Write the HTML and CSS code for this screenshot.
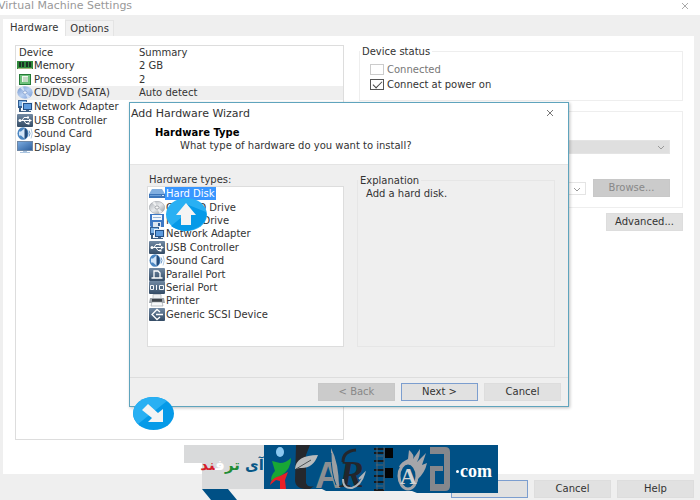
FILE: index.html
```html
<!DOCTYPE html>
<html lang="en">
<head>
<meta charset="utf-8">
<title>Virtual Machine Settings</title>
<link rel="stylesheet" href="styles.css">
</head>
<body>
<svg class="defs" aria-hidden="true">
  <defs>
    <linearGradient id="slate" x2="0" y2="1"><stop stop-color="#7189a3"/><stop offset="1" stop-color="#344c66"/></linearGradient>
    <linearGradient id="steel" x2="1" y2="1"><stop stop-color="#78a9df"/><stop offset="1" stop-color="#2f619f"/></linearGradient>
    <linearGradient id="disc" x2="1" y2="1"><stop stop-color="#6f93cb"/><stop offset=".5" stop-color="#b9d0f2"/><stop offset="1" stop-color="#7298d4"/></linearGradient>
    <linearGradient id="silver" x2="1" y2="1"><stop stop-color="#a9adb3"/><stop offset=".5" stop-color="#e8eaec"/><stop offset="1" stop-color="#8f949b"/></linearGradient>
  </defs>
  <symbol id="i-memory" viewBox="0 0 16 13"><path fill="#2f8a3c" d="M0 2h16v8H0z"/><path fill="#1d3323" d="M2 3h2v5H2zM5 3h2v5H5zM9 3h2v5H9zM12 3h2v5h-2z"/><path fill="#a7b77b" d="M1 9h14v1H1z"/></symbol>
  <symbol id="i-cpu" viewBox="0 0 16 13"><path fill="#257a37" d="M2 1h12v11H2z"/><path fill="#6fc27c" d="M3 2h10v9H3z"/><path fill="#f1f7ef" d="M5 3h6v6H5z"/><path fill="#c5d9c5" d="M6 4h5v5H6z"/></symbol>
  <symbol id="i-cd" viewBox="0 0 16 13"><ellipse cx="8" cy="6.500" rx="7.700" ry="6.200" fill="url(#disc)"/><path fill="#dfeafa" opacity=".8" d="M8 6.500 3 1.700 6 .6zM8 6.500l5.500 4.300-3 1.600z"/><ellipse cx="8" cy="6.500" rx="2" ry="1.600" fill="#eef3fb" stroke="#6d8cbe" stroke-width=".6"/></symbol>
  <symbol id="i-dvd" viewBox="0 0 16 13"><ellipse cx="8" cy="6.500" rx="7.700" ry="6.200" fill="url(#silver)" stroke="#92979d" stroke-width=".5"/><path fill="#fff" opacity=".7" d="M8 6.500 3 1.700 6 .6zM8 6.500l5.500 4.300-3 1.600z"/><ellipse cx="8" cy="6.500" rx="2" ry="1.600" fill="#f7f7f7" stroke="#8b8f95" stroke-width=".7"/></symbol>
  <symbol id="i-net" viewBox="0 0 16 13"><path fill="#315d91" d="M1 0h9v8H1z"/><path fill="#80b3e6" d="M2 1h7v5H2z"/><path fill="#3e5c7d" d="M2 8h2v3h3v1H2z"/><path fill="#e9f1fa" d="M5 2h11v9H5z"/><path fill="#234f84" d="M6 3h9v7H6z"/><path fill="#5d9bde" d="M7 4h7v5H7z"/><path fill="#43658b" d="M9 10h3v1h2v1H7v-1h2z"/></symbol>
  <symbol id="i-usb" viewBox="0 0 16 13"><rect width="16" height="13" rx="1" fill="url(#slate)"/><path stroke="#fff" fill="none" d="M3 6.500h10M5 6.500l2-3h3M7 6.500l2 3h2"/><circle cx="3" cy="6.500" r="1.500" fill="#fff"/><path fill="#fff" d="m12 4.800 3 1.700-3 1.700zM10 2.500h2v2h-2zM10.500 8.500h2v2h-2z"/></symbol>
  <symbol id="i-sound" viewBox="0 0 16 13"><ellipse cx="6" cy="6.500" rx="5.500" ry="6.300" fill="#4a86c2"/><path fill="#d4e6f8" d="M2 4.500h2L8 1v11L4 8.500H2z"/><path fill="#234b7a" d="M7.500 1q3 1 3 5.500t-3 5.500z"/><path fill="none" stroke="#6d9bcb" d="M12 3.500q2 3 0 6"/><path fill="none" stroke="#b5cde4" d="M14 1.500q2.500 5 0 10"/></symbol>
  <symbol id="i-display" viewBox="0 0 16 13"><path fill="#6e87a5" d="M0 0h16v10H0z"/><path fill="url(#steel)" d="M1 1h14v8H1z"/><path fill="#aac4df" d="M6 10h4v1h3v1H3v-1h3z"/></symbol>
  <symbol id="i-disk" viewBox="0 0 16 13"><path fill="#82afe0" d="M3 2h10l3 5v4H0V7z"/><path fill="#3d75b9" d="M0 7h16v4H0z"/><path fill="#6da0d9" d="M1 8h11v1H1z"/><path fill="#d4e7fa" d="M13 8h2v1h-2z"/></symbol>
  <symbol id="i-floppy" viewBox="0 0 16 13"><path fill="#3d78c5" d="M1 0h14v13H2l-1-1z"/><path fill="#f3f7fc" d="M3 1h10v5H3z"/><path fill="#99b6d9" d="M4 3h8v1H4z"/><path fill="#dbe4ef" d="M4 8h8v5H4z"/><path fill="#315c98" d="M9 9h2v3H9z"/></symbol>
  <symbol id="i-parallel" viewBox="0 0 16 13"><rect width="16" height="13" rx="1" fill="url(#slate)"/><path fill="none" stroke="#fff" stroke-width="1.300" d="M5 10V3h4l2 2v5M2.500 10h11"/></symbol>
  <symbol id="i-serial" viewBox="0 0 16 13"><rect width="16" height="13" rx="1" fill="url(#slate)"/><path fill="none" stroke="#f4f6f8" d="M1.500 4.500h3v4h-3zM7.500 4v5M10.500 4.500h4v4h-4z"/></symbol>
  <symbol id="i-printer" viewBox="0 0 16 13"><path fill="#edf0f2" stroke="#a6abb0" stroke-width=".6" d="M4 .5h8v5H4z"/><path fill="#9ea4aa" d="M1 4h14l1 5H0z"/><path fill="#3f454b" d="M3 5h10v3H3z"/><path fill="#f8f9fa" stroke="#92989f" stroke-width=".6" d="M3 8h10l1 4H2z"/></symbol>
  <symbol id="i-scsi" viewBox="0 0 16 13"><rect width="16" height="13" rx="1" fill="url(#slate)"/><path fill="none" stroke="#fff" stroke-width="1.300" d="m11 4-3-2.500-5 5 5 5L11 9M7 6.500h7"/></symbol>
  <symbol id="i-close" viewBox="0 0 8 8"><path fill="none" stroke="currentColor" d="m1 1 6 6M7 1 1 7"/></symbol>
  <symbol id="i-chevron" viewBox="0 0 8 5"><path fill="none" stroke="currentColor" d="m1 1 3 3 3-3"/></symbol>
</svg>

<main class="window">
  <header class="titlebar">
    <h1>Virtual Machine Settings</h1>
    <button class="close" aria-label="Close"><svg><use href="#i-close"/></svg></button>
  </header>
  <nav class="tabs">
    <button class="tab current">Hardware</button>
    <button class="tab">Options</button>
  </nav>
  <section class="pane">
    <div class="devices">
      <table>
        <thead><tr><th>Device</th><th>Summary</th></tr></thead>
        <tbody>
          <tr><td><svg class="icon"><use href="#i-memory"/></svg>Memory</td><td>2 GB</td></tr>
          <tr><td><svg class="icon"><use href="#i-cpu"/></svg>Processors</td><td>2</td></tr>
          <tr class="active"><td><svg class="icon"><use href="#i-cd"/></svg>CD/DVD (SATA)</td><td>Auto detect</td></tr>
          <tr><td><svg class="icon"><use href="#i-net"/></svg>Network Adapter</td><td></td></tr>
          <tr><td><svg class="icon"><use href="#i-usb"/></svg>USB Controller</td><td></td></tr>
          <tr><td><svg class="icon"><use href="#i-sound"/></svg>Sound Card</td><td></td></tr>
          <tr><td><svg class="icon"><use href="#i-display"/></svg>Display</td><td></td></tr>
        </tbody>
      </table>
    </div>
    <div class="details">
      <fieldset class="group status">
        <legend>Device status</legend>
        <label class="check off"><input type="checkbox" disabled>Connected</label>
        <label class="check"><input type="checkbox" checked>Connect at power on</label>
      </fieldset>
      <fieldset class="group connection">
        <div class="combo filled"><select aria-label="Drive" disabled></select><svg><use href="#i-chevron"/></svg></div>
        <div class="file">
          <div class="combo"><select aria-label="File" disabled></select><svg><use href="#i-chevron"/></svg></div>
          <button class="btn" disabled>Browse...</button>
        </div>
      </fieldset>
      <button class="btn advanced">Advanced...</button>
    </div>
  </section>
  <footer class="actions">
    <button class="btn primary" aria-label="OK"></button>
    <button class="btn">Cancel</button>
    <button class="btn">Help</button>
  </footer>
</main>

<section class="wizard" role="dialog" aria-labelledby="wizard-title">
  <header class="wizard-head">
    <div class="wizard-bar">
      <h2 id="wizard-title">Add Hardware Wizard</h2>
      <button class="close" aria-label="Close"><svg><use href="#i-close"/></svg></button>
    </div>
    <h3>Hardware Type</h3>
    <p>What type of hardware do you want to install?</p>
  </header>
  <div class="wizard-body">
    <div class="types">
      <h4 id="types-label">Hardware types:</h4>
      <ul aria-labelledby="types-label">
        <li class="selected"><svg class="icon"><use href="#i-disk"/></svg><span>Hard Disk</span></li>
        <li><svg class="icon"><use href="#i-dvd"/></svg><span>CD/DVD Drive</span></li>
        <li><svg class="icon"><use href="#i-floppy"/></svg><span>Floppy Drive</span></li>
        <li><svg class="icon"><use href="#i-net"/></svg><span>Network Adapter</span></li>
        <li><svg class="icon"><use href="#i-usb"/></svg><span>USB Controller</span></li>
        <li><svg class="icon"><use href="#i-sound"/></svg><span>Sound Card</span></li>
        <li><svg class="icon"><use href="#i-parallel"/></svg><span>Parallel Port</span></li>
        <li><svg class="icon"><use href="#i-serial"/></svg><span>Serial Port</span></li>
        <li><svg class="icon"><use href="#i-printer"/></svg><span>Printer</span></li>
        <li><svg class="icon"><use href="#i-scsi"/></svg><span>Generic SCSI Device</span></li>
      </ul>
    </div>
    <fieldset class="group explanation">
      <legend>Explanation</legend>
      <p>Add a hard disk.</p>
    </fieldset>
  </div>
  <footer class="wizard-foot">
    <button class="btn" disabled>&lt; Back</button>
    <button class="btn primary">Next &gt;</button>
    <button class="btn">Cancel</button>
  </footer>
</section>

<svg class="pointer up" viewBox="0 0 41 33" aria-hidden="true">
  <ellipse cx="20.500" cy="16.500" rx="20.500" ry="16.500" fill="#29b0f3"/>
  <path fill="#069ae8" d="m20 6 20 8q2 8-6 14-8 5-15 5-9-1-14-5l11-9z"/>
  <path fill="#f4f4f4" d="m20 5 10 12h-5v10H15V17h-5z"/>
</svg>
<svg class="pointer down" viewBox="0 0 41 33" aria-hidden="true">
  <ellipse cx="20.500" cy="16.500" rx="20.500" ry="16.500" fill="#069ae8"/>
  <path fill="#29b0f3" d="M34 4 5 27Q-3 18 2 9 8 0 20 0q8 0 14 4z"/>
  <path fill="#f4f4f4" d="m15 7 10 9 5-4v13H15l4-4L9 13z"/>
</svg>

<aside class="brand" aria-label="Site logo">
  <div class="brand-shade"></div>
  <div class="brand-name" lang="fa" dir="rtl"><span class="navy">آی</span> <span class="green">تر</span><span class="white">ف</span><span class="red">ند</span></div>
  <svg class="brand-art" viewBox="0 0 234 48" aria-hidden="true">
    <path fill="#005085" d="M0 0h234v48h-81l-5-2H62l-4-2H0z"/>
    <ellipse cx="16" cy="7" rx="4" ry="5" fill="#8bc8f0"/>
    <path fill="#18a735" d="M27 13q0 11-9 17l-11 6q0-6 4-10l-3-10 8 2q6 0 11-5z"/>
    <path fill="#e82127" d="M6 40q1-7 10-9l8-4-3 8 1 9h-6v-8l-4-1z"/>
    <path fill="#25282d" d="M32 0h14l-4 10v28q2 5 8 3l-4 3q-15 1-15-9z"/>
    <path fill="#b9bcbd" d="M31 24Q32 10 54 10q-5 14-18 13z"/>
    <path fill="none" stroke="#4d5355" d="m32 24 15-9"/>
    <text x="51" y="43" font-family="Liberation Sans" font-weight="700" font-size="36" fill="#8c8e91">A</text>
    <path fill="#9c9fa2" d="M67 3q8 15 8 40-9-10-8-22z"/>
    <path fill="none" stroke="#005085" d="M67 8q0 20 5 32"/>
    <text x="75" y="42" font-family="Liberation Serif" font-style="italic" font-weight="700" font-size="37" fill="#23262c">R</text>
    <path fill="none" stroke="#23262c" stroke-width="3" d="M79 17q0-11 13-12"/>
    <path fill="none" stroke="#aeb3b9" stroke-width="2" d="M79 34q0 10 9 9 9-3 12-14l-5 5"/>
    <path stroke="#15191d" stroke-width="2" d="M110 4h10M110 8h10M110 16h10M110 25h10M110 31h10M110 37h10M110 45h10"/>
    <path stroke="#56616a" d="M113 2v43M120 2v43M112 11h7M112 20h7M112 41h7"/>
    <path fill="#030405" d="M121 3h8v10h-8zM121 23h8v10h-8z"/>
    <path fill="#a5a6aa" d="M135 22q2-5 9-8l1-9q6 5 4 9l7-10q0 8-3 13l9-9-4 12 5-2q-2 10-10 17 0-14-18-13z"/>
    <ellipse cx="144" cy="31" rx="9" ry="13" fill="#005085" stroke="#a5a6aa" stroke-width="3"/>
    <text x="136" y="39" font-family="Liberation Serif" font-weight="700" font-size="23" fill="#d1d2d3">A</text>
    <path fill="#85878c" d="M166 2h15q5 0 5 5v34q0 5-5 5h-15V21h13v5h-8v13h9V9h-14z"/>
    <path fill="#85878c" d="M180 22h2v6h-2z"/>
  </svg>
  <div class="brand-domain"><i></i>com</div>
  <svg class="brand-tail" viewBox="0 0 36 11" aria-hidden="true"><path fill="#005085" d="M0 0h26l9 11H9z"/></svg>
</aside>
</body>
</html>
```
FILE: styles.css
```css
* { box-sizing: border-box; }

body {
  margin: 0;
  overflow: hidden;
  background: #efefef;
  color: #333;
  font: 10px/13px "DejaVu Sans", sans-serif;
}

h1, h2, h3, h4, p, ul { margin: 0; padding: 0; font-size: inherit; font-weight: 400; }
button, select, input { margin: 0; padding: 0; font: inherit; color: inherit; border-radius: 0; }
.defs { position: absolute; width: 0; height: 0; }
.icon { flex: none; width: 16px; height: 13px; display: block; }

/* Main window */
.window { display: flex; flex-direction: column; min-height: 100vh; }
.titlebar {
  display: flex;
  justify-content: space-between;
  align-items: center;
  height: 15px;
  padding-right: 11px;
  background: #fff;
  color: #999;
}
.titlebar h1 { margin-left: -2px; padding-bottom: 3px; font-size: 11px; line-height: 12px; }
.close { display: grid; place-items: center; width: 8px; height: 8px; border: 0; background: none; color: #777; }
.close svg { width: 8px; height: 8px; }
.titlebar .close { color: #aaa; margin-bottom: 4px; }

.tabs { display: flex; align-items: flex-end; height: 21px; padding-left: 3px; }
.tab { height: 16px; padding: 0 4px; border: 1px solid #e4e4e4; border-bottom: 0; background: #f2f2f2; }
.tab.current { height: 17px; padding: 0 6px 2px; border-color: #fff; background: #fff; }

.pane {
  flex: 1;
  display: grid;
  grid-template-columns: 329fr 324fr;
  gap: 15px;
  margin: 0 6px 0 3px;
  padding: 9px 11px 34px 12px;
  background: #fff;
}
.devices { border: 1px solid #ddd; }
.devices table { width: 100%; height: 108px; border-collapse: collapse; table-layout: fixed; }
.devices th, .devices td { padding: 0 0 0 1px; font-weight: 400; text-align: left; vertical-align: middle; white-space: nowrap; }
.devices th { padding-left: 3px; }
.devices th:first-child { width: 120px; }
.devices td:last-child { padding-left: 3px; }
.devices .icon { float: left; margin-right: 1px; }
.devices .active { background: #efefef; }

.group { margin: 0; min-width: 0; border: 1px solid #eee; }
.group legend { padding: 0 2px; margin-left: -10px; }
.status { height: 56px; padding: 4px 10px; }
.check { display: flex; align-items: center; gap: 3px; height: 15px; }
.check.off { color: #777; }
.check input { appearance: none; width: 14px; height: 11px; border: 1px solid #555; background: #fff; }
.check.off input { border-color: #ccc; }
.check input:checked { display: grid; place-items: center; }
.check input:checked::after { content: ""; width: 8px; height: 4px; border: solid #444; border-width: 0 0 1px 1px; rotate: -45deg; margin-bottom: 2px; }
.details { display: flex; flex-direction: column; }
.connection { height: 97px; margin-top: 10px; padding: 28px 12px 0; }
.combo { display: grid; align-items: center; flex: 1; height: 13px; border: 1px solid #e4e4e4; color: #999; }
.combo select { grid-area: 1 / 1; appearance: none; width: 100%; height: 100%; border: 0; background: none; }
.combo svg { grid-area: 1 / 1; justify-self: end; width: 8px; height: 5px; margin-right: 4px; }
.combo.filled { height: 14px; background: #dfdfdf; }
.file { display: flex; align-items: center; gap: 7px; margin-top: 25px; }

.btn { width: 77px; height: 18px; border: 1px solid #ddd; background: #e1e1e1; line-height: 14px; }
.btn:disabled { border-color: #c8c8c8; background: #cbcbcb; color: #888; }
.btn.primary { border-color: #7c9ecf; }
.advanced { align-self: flex-end; margin-top: 5px; }
.actions { display: flex; justify-content: flex-end; gap: 6px; height: 26px; padding: 6px 6px 0 0; }

/* Wizard dialog, floating above the main window */
.wizard {
  position: absolute;
  left: 129px;
  top: 102px;
  width: 440px;
  border: 1px solid #5fa4bd;
  background: #efefef;
  box-shadow: 1px 1px 3px rgba(0, 0, 0, .25);
}
.wizard-head { height: 62px; background: #fff; border-bottom: 1px solid #e4e4e4; }
.wizard-bar { display: flex; justify-content: space-between; align-items: center; height: 20px; padding: 0 14px 0 1px; }
.wizard-bar h2 { font-size: 11px; }
.wizard-head h3 { margin: 3px 0 0 25px; color: #000; font-weight: 700; }
.wizard-head p { margin-left: 50px; }
.wizard-body { display: grid; grid-template-columns: 197fr 198fr; gap: 13px; padding: 9px 13px 30px 17px; border-bottom: 1px solid #ddd; }
.types h4 { padding-left: 2px; height: 12px; line-height: 12px; }
.types ul { display: grid; height: 161px; grid-template-rows: repeat(10, 1fr); padding: 0 1px 25px; border: 1px solid #ddd; background: #fff; list-style: none; }
.types li { display: flex; align-items: center; min-height: 0; }
.types span { padding: 0 1px; }
.selected span { background: #3896ff; color: #fff; }
.explanation { border-color: #e6e6e6; padding: 0 8px; }
.group.explanation legend { margin-left: -8px; }
.wizard-foot { display: flex; justify-content: flex-end; gap: 6px; padding: 5px 7px 5px; }

/* Floating pointers */
.pointer { position: absolute; width: 41px; height: 33px; }
.pointer.up { left: 166px; top: 198px; }
.pointer.down { left: 133px; top: 397px; }

/* Site logo laid over the windows */
.brand { position: absolute; left: 184px; top: 445px; display: grid; grid-template-columns: 18px 62px 234px; grid-template-rows: 44px 11px; }
.brand-shade { height: 18px; background: #d9dadb; }
.brand-name { background: #d9dadb; font: 700 15px/40px "DejaVu Sans", sans-serif; text-align: center; white-space: nowrap; }
.navy { color: #075787; }
.green { color: #218c35; }
.white { color: #fff; }
.red { color: #d51f2c; }
.brand-art { grid-area: 1 / 3; width: 234px; height: 48px; overflow: visible; }
.brand-domain { grid-area: 1 / 3; justify-self: end; align-self: center; display: flex; align-items: center; gap: 1px; padding: 8px 6px 0 0; color: #fff; font: 700 18px/20px "Liberation Serif", serif; }
.brand-domain i { width: 3px; height: 3px; border-radius: 50%; background: #fff; }
.brand-tail { grid-area: 2 / 2; width: 36px; height: 11px; }
```
